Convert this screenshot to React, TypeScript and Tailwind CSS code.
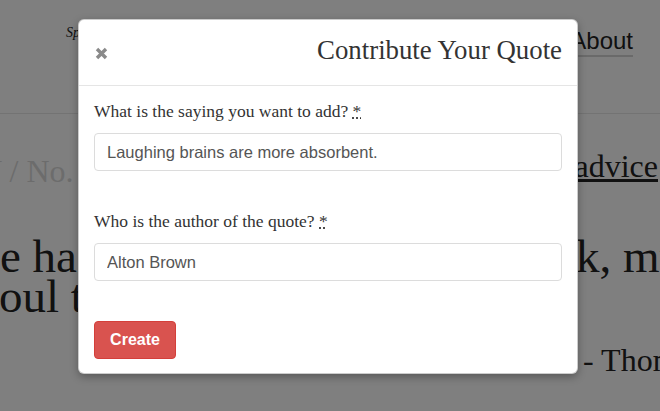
import React from "react"

export default function App() {
  return (
    <div className="relative h-[411px] w-[660px] overflow-hidden bg-white font-['Liberation_Serif',serif] text-[#222]">
      {/* Page behind the modal */}
      <header className="flex h-[114px] items-start border-b border-[#e6e6e6]">
        <span className="ml-[66px] mt-[23px] text-[14px] italic leading-[20px]">Spoken Wisdom</span>
        <a className="ml-auto mr-[27px] mt-[27px] border-b-2 border-[#d4d4d4] font-['Liberation_Sans',sans-serif] text-[24px] leading-[28px]">
          About
        </a>
      </header>

      <div className="flex items-start whitespace-nowrap">
        <span className="ml-[-21px] mt-[41px] text-[32px] leading-[32px] text-[#d9d9d9]">V / No. 12</span>
        <a className="ml-auto mr-[2px] mt-[36px] text-[32px] leading-[32px] underline">advice</a>
      </div>

      <div className="mt-[49px] whitespace-nowrap text-[47px] leading-[40px]">
        <div className="flex">
          <span className="w-[576px] shrink-0">e ha</span>
          <span>k, must</span>
        </div>
        <div className="ml-[-1px]">oul to</div>
      </div>

      <div className="ml-[583px] mt-[28px] whitespace-nowrap text-[32px] leading-[32px]">- Thomas</div>

      {/* Overlay + modal */}
      <div className="absolute inset-0 bg-black/50 pl-[78px] pt-[19px]">
        <div className="w-[500px] rounded-[6px] border border-black/20 bg-white shadow-[0_3px_9px_rgba(0,0,0,0.3)]">
          <div className="flex h-[66px] items-center border-b border-[#e5e5e5] px-[15px]">
            <button className="mt-[2px] ml-[1px] text-[#8a8a8a]">
              <svg width="13" height="13" viewBox="0 0 13 13">
                <path d="M2 2 L11 11 M11 2 L2 11" stroke="currentColor" strokeWidth="3.4" />
              </svg>
            </button>
            <h4 className="mb-[5px] ml-auto text-[26.8px] leading-[26px] text-[#333]">Contribute Your Quote</h4>
          </div>

          <form className="flex flex-col px-[15px] pb-[14px] pt-[14px] text-[#333]">
            <label className="mb-[11px] text-[17.5px] leading-[22px]">
              What is the saying you want to add?{" "}
              <abbr className="cursor-help no-underline [text-decoration:underline_dotted]">*</abbr>
            </label>
            <input
              readOnly
              value="Laughing brains are more absorbent."
              className="h-[38px] rounded-[4px] border border-[#dcdcdc] px-[12px] font-['Liberation_Sans',sans-serif] text-[16.5px] text-[#555] outline-none"
            />

            <label className="mb-[11px] mt-[39px] text-[17.5px] leading-[22px]">
              Who is the author of the quote?{" "}
              <abbr className="cursor-help no-underline [text-decoration:underline_dotted]">*</abbr>
            </label>
            <input
              readOnly
              value="Alton Brown"
              className="h-[38px] rounded-[4px] border border-[#dcdcdc] px-[12px] font-['Liberation_Sans',sans-serif] text-[16.5px] text-[#555] outline-none"
            />

            <div className="mt-[40px]">
              <button
                type="button"
                className="h-[38px] w-[82px] rounded-[4px] border border-[#d43f3a] bg-[#d9534f] font-['Liberation_Sans',sans-serif] text-[16px] font-semibold text-white"
              >
                Create
              </button>
            </div>
          </form>
        </div>
      </div>
    </div>
  )
}
